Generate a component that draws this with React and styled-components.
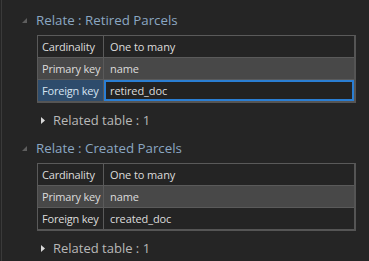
import styled, { createGlobalStyle } from "styled-components";

const GlobalStyle = createGlobalStyle`
  html, body {
    margin: 0;
    padding: 0;
    background: #252525;
  }
  body {
    font-family: "Open Sans", "Noto Sans", sans-serif;
  }
`;

const Panel = styled.div`
  margin-left: 1px;
  border-left: 1px solid #3a3a3a;
  min-height: 261px;
  padding-top: 9px;
  display: flex;
  flex-direction: column;
  gap: 6px;
  box-sizing: border-box;
`;

const Section = styled.section`
  display: flex;
  flex-direction: column;
`;

const Header = styled.div`
  display: flex;
  align-items: center;
  height: 22px;
  padding-left: 20px;
  gap: 9px;
  font-size: 13.3px;
  color: #8ba7c2;
`;

const Table = styled.div`
  margin: 4px 13px 0 35px;
  border-top: 1px solid #5a5a5a;
  border-left: 1px solid #5a5a5a;
  border-right: 2px solid #555;
  border-bottom: 2px solid #555;
  display: flex;
  flex-direction: column;
`;

const Row = styled.div`
  display: grid;
  grid-template-columns: 66px 1fr;
  height: 21px;
  background: ${(p) => (p.$alt ? "#484848" : "#242424")};
  & + & {
    border-top: 1px solid #5a5a5a;
  }
`;

const KeyCell = styled.div`
  display: flex;
  align-items: center;
  padding-left: 4px;
  border-right: 1px solid #5a5a5a;
  font-size: 11px;
  letter-spacing: -0.2px;
  color: ${(p) => (p.$active ? "#d6e4f2" : "#dcdcdc")};
  background: ${(p) => (p.$active ? "#2e4c6c" : "transparent")};
  white-space: nowrap;
  overflow: hidden;
`;

const ValueCell = styled.div`
  display: flex;
  align-items: center;
  padding-left: 6px;
  font-size: 11px;
  letter-spacing: -0.1px;
  color: #dcdcdc;
  box-sizing: border-box;
  ${(p) =>
    p.$editing &&
    `
    padding-left: 4px;
    border: 2px solid #2a7ed3;
    background: #222;
  `}
`;

const Related = styled.div`
  display: flex;
  align-items: center;
  height: 22px;
  margin-top: 6px;
  padding-left: 39px;
  gap: 8px;
  font-size: 13px;
  color: #b8b8b8;
`;

const Expanded = () => (
  <svg width="5" height="5" viewBox="0 0 5 5">
    <polygon points="5,0 5,5 0,5" fill="#5e5e5e" />
  </svg>
);

const Collapsed = () => (
  <svg width="4" height="7" viewBox="0 0 4 7">
    <polygon points="0,0 4,3.5 0,7" fill="#d8d8d8" />
  </svg>
);

const relates = [
  { name: "Retired Parcels", foreign: "retired_doc", editing: true },
  { name: "Created Parcels", foreign: "created_doc", editing: false },
];

function RelateSection({ name, foreign, editing }) {
  return (
    <Section>
      <Header>
        <Expanded />
        <span>Relate : {name}</span>
      </Header>
      <Table>
        <Row>
          <KeyCell>Cardinality</KeyCell>
          <ValueCell>One to many</ValueCell>
        </Row>
        <Row $alt>
          <KeyCell>Primary key</KeyCell>
          <ValueCell>name</ValueCell>
        </Row>
        <Row>
          <KeyCell $active={editing}>Foreign key</KeyCell>
          <ValueCell $editing={editing}>{foreign}</ValueCell>
        </Row>
      </Table>
      <Related>
        <Collapsed />
        <span>Related table : 1</span>
      </Related>
    </Section>
  );
}

export default function App() {
  return (
    <>
      <GlobalStyle />
      <Panel>
        {relates.map((r) => (
          <RelateSection key={r.name} {...r} />
        ))}
      </Panel>
    </>
  );
}
